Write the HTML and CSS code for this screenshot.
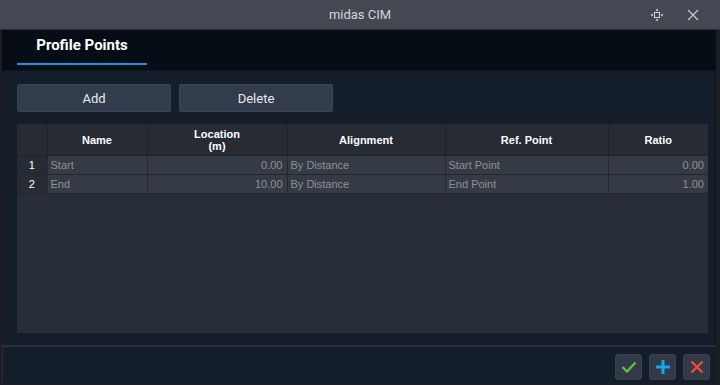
FILE: index.html
```html
<!DOCTYPE html>
<html lang="en">
<head>
  <meta charset="UTF-8" />
  <title>midas CIM</title>
  <link rel="stylesheet" href="styles.css">
</head>
<body>
  <div class="window">
    <div class="titlebar">
      <span></span>
      <span class="title">midas CIM</span>
      <div class="title-icons">
        <svg class="ico-move" width="12" height="12" viewBox="0 0 12 12">
          <rect x="3.5" y="3.5" width="5" height="5" fill="none" stroke="#d4d7dc" stroke-width="1"/>
          <path d="M6 0v2M4.8 1h2.4M6 10v2M4.8 11h2.4M0 6h2M1 4.8v2.4M10 6h2M11 4.8v2.4" stroke="#d4d7dc" stroke-width="1"/>
        </svg>
        <svg class="ico-close" width="12" height="12" viewBox="0 0 12 12">
          <path d="M1 1L11 11M11 1L1 11" stroke="#c9ccd1" stroke-width="1.2"/>
        </svg>
      </div>
    </div>

    <div class="tabbar">
      <div class="tab active">Profile Points</div>
    </div>

    <div class="panel">
      <div class="toolbar">
        <button class="btn">Add</button>
        <button class="btn">Delete</button>
      </div>

      <div class="grid-wrap">
        <table class="grid">
          <colgroup>
            <col style="width:30px">
            <col style="width:100px">
            <col style="width:140px">
            <col style="width:158px">
            <col style="width:163px">
            <col style="width:100px">
          </colgroup>
          <thead>
            <tr>
              <th></th>
              <th>Name</th>
              <th>Location<br>(m)</th>
              <th>Alignment</th>
              <th>Ref. Point</th>
              <th>Ratio</th>
            </tr>
          </thead>
          <tbody>
            <tr>
              <td class="rownum">1</td>
              <td>Start</td>
              <td class="num">0.00</td>
              <td>By Distance</td>
              <td>Start Point</td>
              <td class="num">0.00</td>
            </tr>
            <tr>
              <td class="rownum">2</td>
              <td>End</td>
              <td class="num">10.00</td>
              <td>By Distance</td>
              <td>End Point</td>
              <td class="num">1.00</td>
            </tr>
          </tbody>
        </table>
      </div>
    </div>

    <div class="footer">
      <button class="icon-btn">
        <svg width="16" height="12" viewBox="0 0 16 12"><path d="M1.5 6L6 10.5L14.5 1.5" fill="none" stroke="#5cc23c" stroke-width="2.4"/></svg>
      </button>
      <button class="icon-btn">
        <svg width="16" height="16" viewBox="0 0 16 16"><path d="M8 1v14M1 8h14" stroke="#14a6f2" stroke-width="3"/></svg>
      </button>
      <button class="icon-btn">
        <svg width="14" height="14" viewBox="0 0 14 14"><path d="M1.5 1.5L12.5 12.5M12.5 1.5L1.5 12.5" stroke="#f2493a" stroke-width="2.4"/></svg>
      </button>
    </div>
  </div>
</body>
</html>
```

FILE: styles.css
```css
body {
  margin: 0;
  background-color: #1b1e22;
  font-family: "Liberation Sans", Arial, sans-serif;
}
.window {
  width: 720px;
  height: 385px;
  display: flex;
  flex-direction: column;
  overflow: hidden;
}
.titlebar {
  height: 29px;
  flex-shrink: 0;
  background-color: #434852;
  display: grid;
  grid-template-columns: 1fr auto 1fr;
  align-items: center;
  border-bottom: 1px solid #2b2f35;
}
.title {
  font-family: Roboto, sans-serif;
  font-size: 13px;
  color: #d2d5da;
}
.title-icons {
  display: flex;
  justify-content: flex-end;
  align-items: center;
  gap: 24px;
  padding-right: 21px;
}
.tabbar {
  height: 40px;
  flex-shrink: 0;
  background-color: #070d15;
  margin: 0 4px 0 2px;
  padding-left: 15px;
  display: flex;
  align-items: flex-end;
  border-bottom: 1px solid #0e151e;
}
.tab {
  width: 130px;
  height: 34px;
  box-sizing: border-box;
  text-align: center;
  font-family: Roboto, sans-serif;
  font-weight: bold;
  font-size: 15px;
  line-height: 28px;
  color: #ffffff;
  margin-bottom: 5px;
}
.tab.active {
  border-bottom: 2px solid #1592e6;
}
.panel {
  flex: 1;
  margin: 0 4px 0 2px;
  background-color: #141e2b;
  padding: 13px 7px 10px 15px;
  border-right: 1px solid #0d131b;
  display: flex;
  flex-direction: column;
}
.toolbar {
  display: flex;
  gap: 8px;
}
.btn {
  width: 154px;
  height: 28px;
  background-color: #333c4c;
  border: 1px solid #3b4454;
  border-radius: 2px;
  color: #e8eaed;
  font-family: Roboto, sans-serif;
  font-size: 13px;
  padding: 0;
}
.grid-wrap {
  margin-top: 12px;
  width: 691px;
  height: 209px;
  background-color: #282e38;
}
.grid {
  border-collapse: collapse;
  table-layout: fixed;
  width: 691px;
  font-size: 11px;
}
.grid th {
  height: 31px;
  padding: 0;
  background-color: #262b34;
  color: #ffffff;
  font-weight: bold;
  line-height: 12px;
  border-right: 1px solid #1e232b;
  border-bottom: 1px solid #1e232b;
}
.grid td {
  height: 18px;
  padding: 0 4px 0 3px;
  background-color: #353b45;
  color: #8d9196;
  border-right: 1px solid #23282f;
  border-bottom: 1px solid #23282f;
  white-space: nowrap;
}
.grid td.rownum {
  background-color: #262b34;
  color: #ffffff;
  text-align: center;
  padding: 0;
}
.grid td.num {
  text-align: right;
}
.grid th:last-child,
.grid td:last-child {
  border-right: none;
}
.footer {
  height: 38px;
  box-sizing: border-box;
  flex-shrink: 0;
  margin: 0 4px 2px 2px;
  background-color: #141e2b;
  border-top: 2px solid #2a2e35;
  border-left: 1px solid #2a2e35;
  display: flex;
  justify-content: flex-end;
  align-items: flex-start;
  gap: 7px;
  padding: 7px 6px 0 0;
}
.icon-btn {
  width: 27px;
  height: 26px;
  padding: 0;
  background-color: #323a48;
  border: 1px solid #394252;
  border-radius: 3px;
  display: flex;
  align-items: center;
  justify-content: center;
}
```
